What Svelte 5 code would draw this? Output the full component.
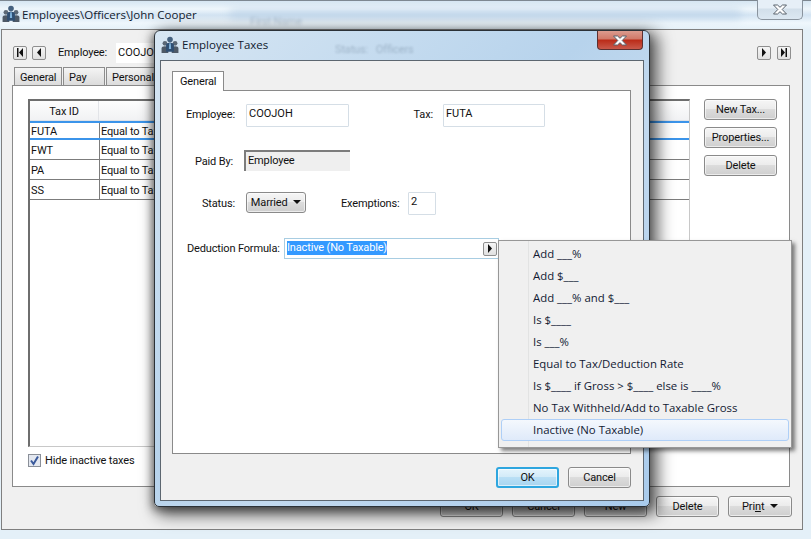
<script>
  const rows = [
    { id: 'FUTA', sel: true },
    { id: 'FWT' },
    { id: 'PA' },
    { id: 'SS' }
  ];
  const menu = ['Add ___%', 'Add $___', 'Add ___% and $___', 'Is $____', 'Is ___%', 'Equal to Tax/Deduction Rate', 'Is $____ if Gross > $____ else is ____%', 'No Tax Withheld/Add to Taxable Gross'];
</script>

{#snippet people(size)}
  <svg class="people" width={size} height={size} viewBox="0 0 16 16">
    <circle cx="3.5" cy="6.5" r="2.1" fill="#5b6876" />
    <path d="M0.5 15v-4q0-2 3-2t3 2v4z" fill="#4d5967" />
    <circle cx="12.5" cy="6.5" r="2.1" fill="#5b6876" />
    <path d="M9.5 15v-4q0-2 3-2t3 2v4z" fill="#4d5967" />
    <circle cx="8" cy="3.2" r="2.5" fill="#45617f" />
    <path d="M4.5 14v-6q0-2 3.5-2t3.5 2v6z" fill="#2f4f73" />
    <path d="M7.3 6.5h1.4l.3 5h-2z" fill="#7fb2dc" />
  </svg>
{/snippet}

{#snippet nav(kind)}
  <span class="nav">
    <svg width="8" height="9" viewBox="0 0 8 9">
      {#if kind === 'first'}
        <path d="M1 0h1.5v9H1zM7 0v9L3 4.500z" fill="#111" />
      {:else if kind === 'prev'}
        <path d="M6 0v9L2 4.500z" fill="#111" />
      {:else if kind === 'next'}
        <path d="M2 0v9l4-4.500z" fill="#111" />
      {:else}
        <path d="M1 0v9l4-4.500zM5.500 0H7v9H5.500z" fill="#111" />
      {/if}
    </svg>
  </span>
{/snippet}

{#snippet closeX()}
  <svg width="16" height="11" viewBox="0 0 16 11">
    <path d="M1.500 1h4L8 3.300 10.500 1h4l-4.300 4.500 4.300 4.500h-4L8 7.700 5.500 10h-4l4.300-4.500z" fill="#fff" stroke="#59626d" stroke-width="1" stroke-linejoin="round" />
  </svg>
{/snippet}

<div class="desk">
  <!-- Main window -->
  <section class="win main">
    <header class="main-title">
      {@render people(18)}
      <span class="main-title-text">Employees\Officers\John Cooper</span>
      <span class="glass-a"></span>
      <span class="glass-b">First Name</span>
      <button class="main-close">{@render closeX()}</button>
    </header>
    <div class="client">
      <div class="toolbar">
        {@render nav('first')}
        {@render nav('prev')}
        <span class="emp-label">Employee:</span>
        <span class="emp-input">COOJOH</span>
        <span class="spacer"></span>
        <span class="nav-gap">{@render nav('next')}</span>
        {@render nav('last')}
      </div>
      <div class="tabs">
        <span class="tab t1">General</span>
        <span class="tab t2">Pay</span>
        <span class="tab t3">Personal</span>
      </div>
      <div class="panel">
        <div class="list-wrap">
          <div class="list-col">
            <div class="list">
              <div class="list-head">
                <span class="c1 hd">Tax ID</span>
                <span class="c2"></span>
              </div>
              {#each rows as r}
                <div class="row" class:sel={r.sel}>
                  <span class="c1">{r.id}</span>
                  <span class="c2">Equal to Tax/Deduction Rate</span>
                </div>
              {/each}
            </div>
            <label class="check">
              <span class="box">
                <svg width="11" height="11" viewBox="0 0 11 11"><path d="M2 5.500l2.500 3.500L9 1.500" fill="none" stroke="#3a5a9c" stroke-width="2" /></svg>
              </span>
              Hide inactive taxes
            </label>
          </div>
          <div class="side">
            <button class="btn side-btn">New Tax...</button>
            <button class="btn side-btn">Properties...</button>
            <button class="btn side-btn">Delete</button>
          </div>
        </div>
      </div>
      <div class="main-actions">
        <button class="btn act">OK</button>
        <button class="btn act">Cancel</button>
        <button class="btn act">New</button>
        <button class="btn act">Delete</button>
        <button class="btn act print">Pri<u>n</u>t <span class="caret"></span></button>
      </div>
    </div>
  </section>

  <!-- Dialog -->
  <section class="win dialog">
    <header class="dlg-title">
      {@render people(18)}
      <span class="dlg-title-text">Employee Taxes</span>
      <span class="dlg-ghost">Status:&nbsp;&nbsp;&nbsp;Officers</span>
      <button class="dlg-close">{@render closeX()}</button>
    </header>
    <div class="dlg-client">
      <div class="dlg-tabs"><span class="dlg-tab">General</span></div>
      <div class="dlg-panel">
        <div class="f f1">
          <span class="lb l-emp">Employee:</span>
          <span class="inp i-emp">COOJOH</span>
          <span class="lb l-tax">Tax:</span>
          <span class="inp i-tax">FUTA</span>
        </div>
        <div class="f f2">
          <span class="lb l-paid">Paid By:</span>
          <span class="ro">Employee</span>
        </div>
        <div class="f f3">
          <span class="lb l-status">Status:</span>
          <button class="btn drop">Married <span class="caret"></span></button>
          <span class="lb l-ex">Exemptions:</span>
          <span class="inp i-ex">2</span>
        </div>
        <div class="f f4">
          <span class="lb l-ded">Deduction Formula:</span>
          <span class="formula">
            <span class="selected">Inactive (No Taxable)</span>
            <span class="spacer"></span>
            {@render nav('next')}
          </span>
        </div>
      </div>
      <div class="dlg-actions">
        <button class="btn act ok">OK</button>
        <button class="btn act">Cancel</button>
      </div>
    </div>
  </section>

  <!-- Context menu -->
  <ul class="menu">
    {#each menu as m}
      <li>{m}</li>
    {/each}
    <li class="hot">Inactive (No Taxable)</li>
  </ul>
</div>

<style>
  :global(body) {
    margin: 0;
    background: #dfeef7;
  }
  .desk {
    position: relative;
    width: 811px;
    height: 539px;
    overflow: hidden;
    font-family: Roboto, "Liberation Sans", Arial, sans-serif;
    font-size: 11px;
    letter-spacing: -0.15px;
    color: #111;
  }
  button {
    font: inherit;
    letter-spacing: inherit;
    color: inherit;
    padding: 0;
    margin: 0;
  }
  .spacer {
    flex: 1;
  }

  /* main window */
  .win.main {
    position: absolute;
    inset: 0;
    display: flex;
    flex-direction: column;
    border-top: 1px solid #7d8790;
    box-sizing: border-box;
    background: linear-gradient(180deg, #d6e6f2 0, #eef6fb 8px, #d3e4f3 14px, #eff7fc 22px, #e4f0f8 29px);
  }
  .main-title {
    position: relative;
    height: 28px;
    flex: none;
    display: flex;
    align-items: center;
    padding: 0 0 2px 2px;
    box-sizing: border-box;
    gap: 2px;
  }
  .main-title-text {
    font-family: "Open Sans", "Noto Sans", sans-serif;
    font-size: 11.5px;
    letter-spacing: 0;
    color: #10202e;
  }
  .glass-a {
    position: absolute;
    left: 230px;
    right: 70px;
    top: 8px;
    height: 10px;
    background: #b4cde4;
    filter: blur(4px);
    opacity: 0.6;
  }
  .glass-b {
    position: absolute;
    left: 250px;
    top: 14px;
    font-size: 11px;
    color: #476280;
    filter: blur(1.4px);
    opacity: 0.3;
  }
  .main-close {
    position: absolute;
    left: 757px;
    top: -2px;
    width: 46px;
    height: 21px;
    border: 1px solid #8a949e;
    border-top: 0;
    border-radius: 0 0 5px 5px;
    background: linear-gradient(180deg, #e6eff7 0, #e6eff7 45%, #d2dfea 50%, #dce8f2 100%);
    display: flex;
    align-items: center;
    justify-content: center;
  }
  .client {
    flex: none;
    width: 802px;
    height: 501px;
    margin-left: 1px;
    background: #f0f0f0;
    border: 1px solid #7f7f7f;
    box-sizing: border-box;
    display: flex;
    flex-direction: column;
    padding: 12px 11px 0 10px;
  }
  .toolbar {
    display: flex;
    align-items: center;
    height: 21px;
    gap: 5px;
    padding: 0 0 0 1px;
  }
  .nav {
    width: 14px;
    height: 14px;
    flex: none;
    box-sizing: border-box;
    border: 1px solid #8f8f8f;
    border-radius: 2px;
    background: linear-gradient(180deg, #f6f6f6, #e0e0e0);
    display: flex;
    align-items: center;
    justify-content: center;
  }
  .nav-gap {
    margin-right: 1px;
  }
  .emp-label {
    margin-left: 7px;
    width: 53px;
    flex: none;
    margin-bottom: 1px;
  }
  .emp-input {
    width: 70px;
    height: 20px;
    background: #fff;
    margin-left: 0;
    padding: 3px 2px;
    box-sizing: border-box;
    line-height: 14px;
    letter-spacing: 0;
  }
  .tabs {
    display: flex;
    height: 18px;
    margin-top: 4px;
    padding-left: 2px;
    gap: 1px;
  }
  .tab {
    box-sizing: border-box;
    height: 19px;
    border: 1px solid #8c8c8c;
    border-bottom: 0;
    background: linear-gradient(180deg, #f4f4f4, #dadada);
    text-align: left;
    padding: 3px 0 0 5px;
  }
  .t1 { width: 48px; }
  .t2 { width: 42px; }
  .t3 { width: 70px; }
  .panel {
    position: relative;
    width: 778px;
    height: 402px;
    box-sizing: border-box;
    border: 1px solid #8a8a8a;
    background: #fff;
    padding: 13px 0 0 15px;
  }
  .list-wrap {
    display: flex;
  }
  .list-col {
    width: 662px;
    flex: none;
  }
  .list {
    height: 348px;
    box-sizing: border-box;
    border: 1px solid #c8c8c8;
    border-top: 2px solid #6e6e6e;
    border-left: 2px solid #6e6e6e;
  }
  .list-head {
    display: flex;
    height: 20px;
    background: linear-gradient(180deg, #fdfdfd, #f1f2f4);
    border-bottom: 1px solid #dfe2e6;
    box-sizing: border-box;
  }
  .hd {
    text-align: center;
    line-height: 21px;
    border-right: 1px solid #e2e4e8;
    padding-left: 0 !important;
  }
  .row {
    display: flex;
    height: 20px;
    box-sizing: border-box;
    border-bottom: 1px solid #7c7c7c;
    line-height: 22px;
  }
  .row .c2 {
    border-left: 1px solid #7c7c7c;
    width: 60px;
    overflow: hidden;
    padding-left: 1px;
    white-space: nowrap;
  }
  .row.sel {
    height: 19px;
    border-top: 2px solid #3b94ea;
    border-bottom: 2px solid #3b94ea;
    line-height: 17px;
  }
  .c1 {
    width: 69px;
    box-sizing: border-box;
    padding-left: 1px;
    flex: none;
  }
  .check {
    display: flex;
    align-items: center;
    gap: 4px;
    margin-top: 6px;
    height: 15px;
  }
  .box {
    width: 13px;
    height: 13px;
    box-sizing: border-box;
    border: 1px solid #8a8f98;
    background: #e4e8f0;
    display: flex;
    align-items: center;
    justify-content: center;
  }
  .side {
    display: flex;
    flex-direction: column;
    gap: 7px;
    margin-left: 14px;
  }
  .btn {
    box-sizing: border-box;
    border: 1px solid #8a8a8a;
    border-radius: 3px;
    background: linear-gradient(180deg, #f6f6f6 0, #ececec 45%, #dcdcdc 50%, #cfcfcf 100%);
    height: 21px;
    line-height: 18px;
    text-align: center;
    box-shadow: inset 0 0 0 1px rgba(255, 255, 255, 0.6);
  }
  .side-btn {
    width: 73px;
    line-height: 20px;
  }
  .main-actions {
    display: flex;
    gap: 9px;
    justify-content: flex-end;
    margin-top: 9px;
    margin-right: -1px;
  }
  .act {
    width: 63px;
  }
  .print {
    width: 64px;
  }
  .caret {
    display: inline-block;
    width: 0;
    height: 0;
    border: 4px solid transparent;
    border-top: 4px solid #111;
    border-bottom: 0;
    margin-left: 3px;
    vertical-align: 2px;
  }

  /* dialog */
  .win.dialog {
    position: absolute;
    left: 154px;
    top: 30px;
    width: 496px;
    height: 477px;
    box-sizing: border-box;
    border: 1px solid #2b3137;
    border-radius: 6px 6px 5px 5px;
    background: linear-gradient(135deg, #d7e6f3 0, #b7d3ec 45%, #c2d9ef 60%, #a9cbec 100%);
    box-shadow: 5px 5px 16px 3px rgba(0, 0, 0, 0.62), -2px 3px 8px rgba(0, 0, 0, 0.4);
    display: flex;
    flex-direction: column;
    padding: 0 5px 5px 5px;
  }
  .dlg-title {
    position: relative;
    flex: none;
    height: 29px;
    display: flex;
    align-items: center;
    gap: 3px;
    padding: 0 0 2px 1px;
    box-sizing: border-box;
  }
  .dlg-title-text {
    font-family: "Open Sans", "Noto Sans", sans-serif;
    font-size: 11.5px;
    letter-spacing: 0;
    color: #10202e;
  }
  .dlg-ghost {
    position: absolute;
    left: 175px;
    top: 12px;
    color: #40566d;
    filter: blur(1.3px);
    opacity: 0.3;
  }
  .dlg-close {
    position: absolute;
    left: 437px;
    top: 0;
    width: 46px;
    height: 19px;
    box-sizing: border-box;
    border: 1px solid #5c3030;
    border-top: 0;
    border-radius: 0 0 4px 4px;
    background: linear-gradient(180deg, #dc9b8e 0, #d17a6a 42%, #bb2d1a 52%, #c9594a 100%);
    display: flex;
    align-items: center;
    justify-content: center;
  }
  .dlg-client {
    flex: 1;
    background: #f0f0f0;
    border: 1px solid #5c6670;
    padding: 10px 12px 0 11px;
    display: flex;
    flex-direction: column;
  }
  .dlg-tabs {
    height: 19px;
    display: flex;
  }
  .dlg-tab {
    position: relative;
    z-index: 1;
    width: 52px;
    height: 20px;
    box-sizing: border-box;
    border: 1px solid #8a8a8a;
    border-bottom: 0;
    background: #fff;
    padding: 3px 0 0 7px;
  }
  .dlg-panel {
    height: 364px;
    box-sizing: border-box;
    border: 1px solid #8a8a8a;
    background: #fff;
    padding-top: 13px;
  }
  .f {
    display: flex;
    align-items: center;
    box-sizing: border-box;
  }
  .lb {
    flex: none;
    text-align: right;
    white-space: nowrap;
  }
  .inp {
    flex: none;
    box-sizing: border-box;
    border: 1px solid #d5dee6;
    background: #fff;
    padding: 2px;
    border-radius: 1px;
    letter-spacing: 0;
  }
  .f1 { height: 23px; }
  .l-emp { width: 62px; margin-bottom: 3px; }
  .i-emp { width: 103px; height: 23px; margin-left: 11px; }
  .l-tax { margin-left: 64px; width: 20px; margin-bottom: 3px; }
  .i-tax { width: 102px; height: 23px; margin-left: 10px; }
  .f2 { height: 21px; margin-top: 23px; }
  .l-paid { width: 60px; margin-top: 2px; }
  .ro {
    margin-left: 11px;
    width: 106px;
    height: 21px;
    box-sizing: border-box;
    background: #efefef;
    border-top: 2px solid #7c7c7c;
    border-left: 2px solid #7c7c7c;
    padding-left: 2px;
    line-height: 17px;
  }
  .f3 { height: 23px; margin-top: 21px; align-items: flex-start; }
  .l-status { width: 62px; line-height: 24px; }
  .drop { width: 60px; margin-left: 11px; white-space: nowrap; line-height: 20px; }
  .l-ex { margin-left: 35px; width: 57px; line-height: 24px; }
  .i-ex { width: 28px; height: 23px; margin-left: 10px; }
  .f4 { height: 21px; margin-top: 23px; }
  .l-ded { margin-left: 14px; width: 92px; line-height: 24px; }
  .formula {
    margin-left: 5px;
    width: 215px;
    height: 21px;
    box-sizing: border-box;
    border: 1px solid #a8cde2;
    background: #fff;
    display: flex;
    align-items: center;
    padding: 0 1px 0 2px;
  }
  .selected {
    background: #3399ff;
    color: #fff;
    line-height: 14px;
    margin-top: -2px;
  }
  .dlg-actions {
    display: flex;
    gap: 9px;
    justify-content: flex-end;
    margin-top: 13px;
  }
  .ok {
    border: 2px solid #2ea6df;
    background: linear-gradient(180deg, #e4f4fc 0, #d3ebf8 45%, #b9dff5 50%, #a8d5f0 100%);
    line-height: 16px;
  }

  /* menu */
  .menu {
    position: absolute;
    left: 498px;
    top: 240px;
    width: 294px;
    height: 208px;
    box-sizing: border-box;
    margin: 0;
    padding: 2px;
    list-style: none;
    border: 1px solid #979797;
    background: linear-gradient(90deg, #f0f0f0 0, #f0f0f0 29px, #e2e3e3 29px, #e2e3e3 30px, #f0f0f0 30px);
    box-shadow: 3px 3px 4px rgba(0, 0, 0, 0.5);
    font-family: "Open Sans", "Noto Sans", sans-serif;
    font-size: 11.4px;
    letter-spacing: 0;
    color: #121a33;
  }
  .menu li {
    height: 22px;
    line-height: 22px;
    padding-left: 32px;
    white-space: nowrap;
  }
  .menu .hot {
    border: 1px solid #aecff7;
    border-radius: 3px;
    line-height: 20px;
    height: 22px;
    box-sizing: border-box;
    padding-left: 31px;
    background: linear-gradient(180deg, #f4f8fd, #dfeafa);
  }
</style>
